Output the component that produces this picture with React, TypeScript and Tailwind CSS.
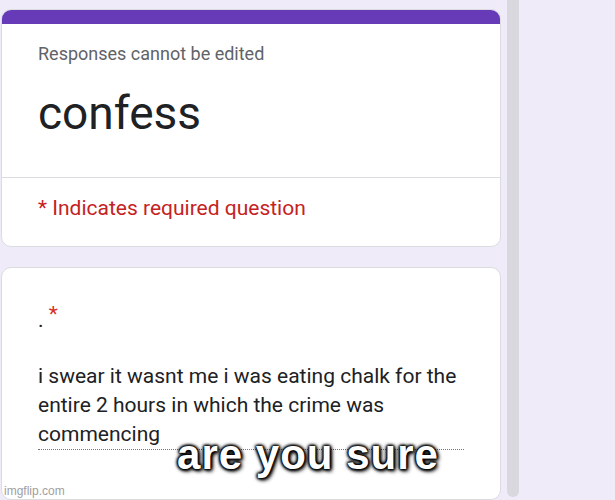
export default function App() {
  return (
    <div className="relative flex h-[500px] w-[615px] overflow-hidden bg-[#efebf8] font-['Roboto',sans-serif]">
      <div className="flex w-[501px] flex-col gap-5 pl-px pt-[9px]">
        <div className="h-[238px] shrink-0 overflow-hidden rounded-[10px] border border-[#dadce0] bg-white">
          <div className="h-[14px] bg-[#673ab7]" />
          <div className="px-9 pb-[36px] pt-[18px]">
            <div className="text-[18px] leading-6 text-[#5f6368]">Responses cannot be edited</div>
            <div className="mt-[20px] text-[46px] leading-[55px] text-[#202124]">confess</div>
          </div>
          <div className="border-t border-[#dadce0] px-9 pt-4">
            <div className="text-[21px] leading-7 text-[#c5221f]">* Indicates required question</div>
          </div>
        </div>
        <div className="h-[233px] shrink-0 rounded-[10px] border border-[#dadce0] bg-white px-9 pt-[38px]">
          <div className="text-[21px] leading-7 text-[#202124]">
            . <span className="relative -top-[6px] text-[#d93025]">*</span>
          </div>
          <div className="mt-7 w-[426px] border-b border-dotted border-[#70757a] text-[21px] leading-[29px] text-[#202124]">
            i swear it wasnt me i was eating chalk for the
            <br />
            entire 2 hours in which the crime was
            <br />
            commencing
          </div>
        </div>
      </div>
      <div className="ml-[6px] h-[497px] w-3 shrink-0 rounded-b-md bg-[#d9d8de]" />
      <div className="pointer-events-none absolute left-[168px] top-[431px] w-[280px] text-center font-['Liberation_Sans',Arial,sans-serif] text-[42px] font-bold leading-[48px] tracking-[1px] text-white [text-shadow:0_0_4px_#000,0_0_4px_#000,0_0_3px_#000,0_0_3px_#000,0_0_2px_#000,2px_2px_4px_#000]">
        are you sure
      </div>
      <div className="absolute bottom-[2px] left-1 font-['Liberation_Sans',Arial,sans-serif] text-[12px] leading-[14px] text-[#a0a0a0]">
        imgflip.com
      </div>
    </div>
  );
}
